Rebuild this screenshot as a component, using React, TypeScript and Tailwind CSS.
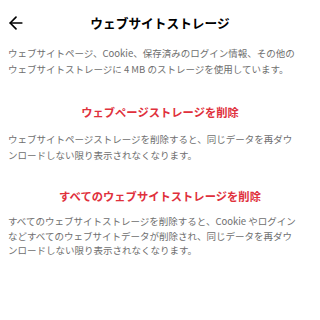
import { ArrowLeft } from "lucide-react";

const font = { fontFamily: '"Noto Sans CJK JP", "Noto Sans", sans-serif' };

const App = () => {
    return (
        <div className="h-[320px] w-[320px] overflow-hidden bg-white" style={font}>
            <div className="relative flex h-[46px] items-center justify-center">
                <ArrowLeft className="absolute left-[6px] top-[13px] text-black" size={20} strokeWidth={2} />
                <h1 className="text-[12.7px] font-bold text-black">ウェブサイトストレージ</h1>
            </div>

            <p className="px-2 text-[9.5px] leading-[15.5px] text-[#6e6e6e] whitespace-nowrap">
                ウェブサイトページ、Cookie、保存済みのログイン情報、その他の
                <br />
                ウェブサイトストレージに 4 MB のストレージを使用しています。
            </p>

            <h2 className="mt-[27px] text-center text-[11.3px] font-bold leading-[16px] text-[#e0303c]">
                ウェブページストレージを削除
            </h2>
            <p className="mt-[12px] px-2 text-[9.5px] leading-[15.5px] text-[#6e6e6e] whitespace-nowrap">
                ウェブサイトページストレージを削除すると、同じデータを再ダウ
                <br />
                ンロードしない限り表示されなくなります。
            </p>

            <h2 className="mt-[25px] text-center text-[11.3px] font-bold leading-[16px] text-[#e0303c]">
                すべてのウェブサイトストレージを削除
            </h2>
            <p className="mt-[10px] px-2 text-[9.5px] leading-[14.5px] text-[#6e6e6e] whitespace-nowrap">
                すべてのウェブサイトストレージを削除すると、Cookie やログイン
                <br />
                などすべてのウェブサイトデータが削除され、同じデータを再ダウ
                <br />
                ンロードしない限り表示されなくなります。
            </p>
        </div>
    );
};

export default App;
